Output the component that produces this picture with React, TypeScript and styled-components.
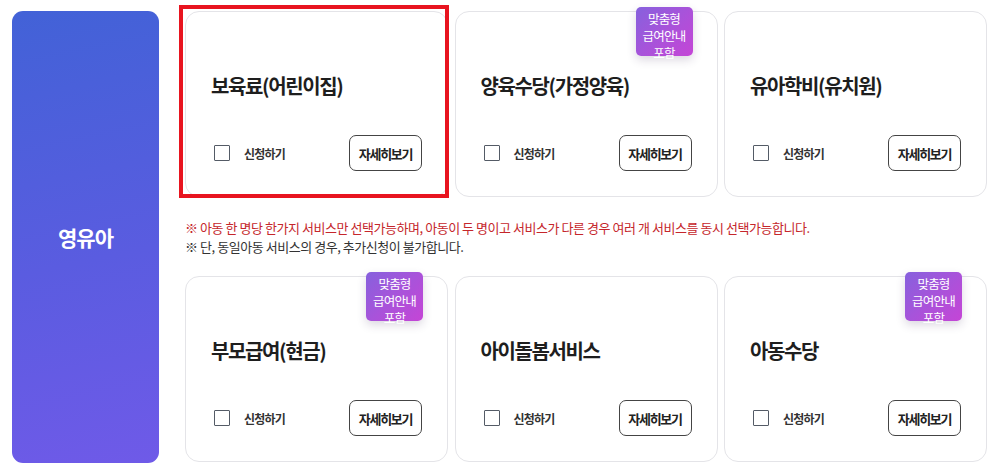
import React, { useState } from "react";
import styled, { createGlobalStyle } from "styled-components";

const GlobalStyle = createGlobalStyle`
  body {
    margin: 0;
    background: #ffffff;
    font-family: "Noto Sans CJK KR", "Noto Sans", sans-serif;
    color: #222;
  }
`;

type Service = {
  title: string;
  badge?: boolean;
  highlight?: boolean;
};

const topRow: Service[] = [
  { title: "보육료(어린이집)", highlight: true },
  { title: "양육수당(가정양육)", badge: true },
  { title: "유아학비(유치원)" },
];

const bottomRow: Service[] = [
  { title: "부모급여(현금)", badge: true },
  { title: "아이돌봄서비스" },
  { title: "아동수당", badge: true },
];

function ServiceCard({ item }: { item: Service }) {
  const [checked, setChecked] = useState(false);

  return (
    <Card $highlight={item.highlight}>
      {item.badge ? (
        <Badge>
          맞춤형
          <br />
          급여안내
          <br />
          포함
        </Badge>
      ) : null}
      <CardTitle>{item.title}</CardTitle>
      <Controls>
        <Apply>
          <Check
            type="checkbox"
            checked={checked}
            onChange={() => setChecked(!checked)}
          />
          신청하기
        </Apply>
        <DetailButton>자세히보기</DetailButton>
      </Controls>
    </Card>
  );
}

export default function App() {
  return (
    <>
      <GlobalStyle />
      <Wrap>
        <AgePanel>영유아</AgePanel>
        <Main>
          <CardRow>
            {topRow.map((item) => (
              <ServiceCard key={item.title} item={item} />
            ))}
          </CardRow>
          <Notes>
            <Note $warn>
              ※ 아동 한 명당 한가지 서비스만 선택가능하며, 아동이 두 명이고
              서비스가 다른 경우 여러 개 서비스를 동시 선택가능합니다.
            </Note>
            <Note>※ 단, 동일아동 서비스의 경우, 추가신청이 불가합니다.</Note>
          </Notes>
          <CardRow>
            {bottomRow.map((item) => (
              <ServiceCard key={item.title} item={item} />
            ))}
          </CardRow>
        </Main>
      </Wrap>
    </>
  );
}

const Wrap = styled.div`
  display: flex;
  gap: 26px;
  padding: 11px 0 0 12px;
`;

const AgePanel = styled.div`
  width: 147px;
  height: 452px;
  border-radius: 11px;
  background: linear-gradient(168deg, #4262d7 0%, #5a5ce0 55%, #6f5ae8 100%);
  display: flex;
  align-items: center;
  justify-content: center;
  color: #fff;
  font-size: 21px;
  font-weight: 700;
  letter-spacing: -1px;
`;

const Main = styled.div`
  display: flex;
  flex-direction: column;
  width: 802px;
`;

const CardRow = styled.div`
  display: grid;
  grid-template-columns: repeat(3, 263px);
  column-gap: 6.5px;
`;

const Card = styled.div<{ $highlight?: boolean }>`
  position: relative;
  height: 186px;
  box-sizing: border-box;
  padding: 60px 25px 25px;
  border: 1px solid #e4e4e8;
  border-radius: 14px;
  background: #fff;
  display: flex;
  flex-direction: column;

  /* red selection frame drawn over the card */
  &::after {
    content: "";
    display: ${(p) => (p.$highlight ? "block" : "none")};
    position: absolute;
    top: -7px;
    left: -7px;
    right: -2px;
    bottom: -2px;
    border: 4px solid #e8141f;
    pointer-events: none;
  }
`;

const Badge = styled.div`
  position: absolute;
  top: -5px;
  right: 24px;
  width: 57px;
  height: 49px;
  box-sizing: border-box;
  padding-top: 3px;
  border-radius: 5px;
  background: linear-gradient(135deg, #8661dd 0%, #a853da 50%, #c545d6 100%);
  box-shadow: 0 4px 10px rgba(60, 40, 90, 0.18);
  color: #fff;
  font-size: 12.5px;
  line-height: 17px;
  letter-spacing: -0.8px;
  text-align: center;
`;

const CardTitle = styled.div`
  font-size: 20px;
  line-height: 28px;
  font-weight: 700;
  letter-spacing: -1.4px;
  color: #1e1e1e;
`;

const Controls = styled.div`
  margin-top: auto;
  display: flex;
  align-items: center;
  justify-content: space-between;
`;

const Apply = styled.label`
  display: flex;
  align-items: center;
  gap: 14px;
  padding-left: 3px;
  font-size: 12px;
  font-weight: 700;
  letter-spacing: -0.8px;
  color: #333;
  cursor: pointer;
`;

const Check = styled.input`
  appearance: none;
  margin: 0;
  width: 16px;
  height: 16px;
  border: 1px solid #545b66;
  border-radius: 1px;
  background: #fff;
  cursor: pointer;
  &:checked {
    background: #4a5fd6;
    border-color: #4a5fd6;
  }
`;

const DetailButton = styled.button`
  width: 73px;
  height: 36px;
  padding: 0;
  border: 1px solid #444;
  border-radius: 7px;
  background: #fff;
  font-family: inherit;
  font-size: 13px;
  font-weight: 700;
  letter-spacing: -1.3px;
  color: #222;
  cursor: pointer;
`;

const Notes = styled.div`
  padding: 21px 0 20px;
`;

const Note = styled.div<{ $warn?: boolean }>`
  font-size: 13px;
  line-height: 19px;
  letter-spacing: -0.45px;
  color: ${(p) => (p.$warn ? "#c5262b" : "#333")};
  white-space: nowrap;
`;
